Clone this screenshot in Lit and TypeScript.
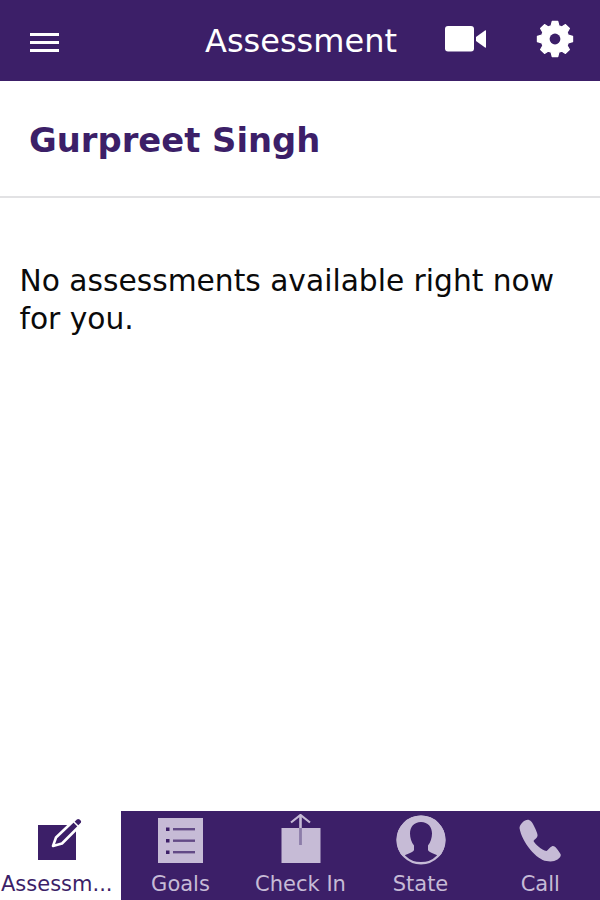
import { LitElement, html, css, svg } from "lit";
import { customElement } from "lit/decorators.js";

const PURPLE = "#3c1f68";

function gearPath(cx: number, cy: number, outer: number, root: number, teeth: number): string {
  const pts: string[] = [];
  const step = (Math.PI * 2) / teeth;
  for (let i = 0; i < teeth; i++) {
    const a = i * step - Math.PI / 2;
    const seq: [number, number][] = [
      [a - step * 0.36, root],
      [a - step * 0.2, outer],
      [a + step * 0.2, outer],
      [a + step * 0.36, root],
    ];
    for (const [t, r] of seq) {
      pts.push(`${(cx + r * Math.cos(t)).toFixed(2)} ${(cy + r * Math.sin(t)).toFixed(2)}`);
    }
  }
  return "M" + pts.join("L") + "z";
}

const ICONS = {
  edit: svg`<rect x="1" y="8" width="38" height="35" fill="currentColor"/>
    <path d="M16 29l3-8.500L39 1.500c1.500-1.300 3-1.300 4.500 0l1 1c1.300 1.500 1.300 3 0 4.500L25 26.500z" fill="currentColor" stroke="#fff" stroke-width="2.600" stroke-linejoin="round"/>
    <path d="M36.500 4.500l5 5" stroke="#fff" stroke-width="1.500"/>`,
  goals: svg`<rect x="0" y="0" width="45" height="45" fill="currentColor"/>
    <g fill="${PURPLE}"><rect x="8" y="9.500" width="3.500" height="3.500"/><rect x="8" y="21" width="3.500" height="3.500"/><rect x="8" y="32.500" width="3.500" height="3.500"/></g>
    <g fill="${PURPLE}" opacity=".72"><rect x="15" y="10" width="22" height="2.400"/><rect x="15" y="21.500" width="22" height="2.400"/><rect x="15" y="33" width="22" height="2.400"/></g>`,
  checkin: svg`<rect x="0.500" y="14" width="39" height="35" fill="currentColor"/>
    <path d="M10 8.500L19.500 1l9.500 7.500" fill="none" stroke="currentColor" stroke-width="2.200"/>
    <path d="M19.500 2V14" stroke="currentColor" stroke-width="2.600"/>
    <path d="M19.500 14V31" stroke="#8c7ca9" stroke-width="2.800"/>`,
  state: svg`<circle cx="25" cy="25" r="24.500" fill="currentColor"/>
    <path d="M25 7c-7 0-11 5-11 11.500 0 4.500 1.500 9 4 12V35c-1 2.500-7 3.500-12 7l9 8h20l9-8c-5-3.500-11-4.500-12-7v-4.500c2.500-3 4-7.500 4-12C36 12 32 7 25 7z" fill="${PURPLE}"/>
    <circle cx="25" cy="25" r="23.300" fill="none" stroke="currentColor" stroke-width="2.400"/>`,
  call: svg`<path d="M.5 9C1 5 6 0 10 1c2 .5 3.500 3 5 6 1.500 3 4 8 3.500 10-.5 2-3 3.500-4 5 1.500 3 8 9 13 10 1.500-1 3.500-4 6-5 3-.5 6 5 8 8 1 2-1 4-3 5.500-3 2-7 2.500-11 1.500C18 41 3 24 .5 9z" fill="currentColor"/>`,
};

@customElement("app-root")
export class AppRoot extends LitElement {
  static styles = css`
    :host { display: flex; flex-direction: column; height: 900px; width: 600px; background: #fff; font-family: "DejaVu Sans", sans-serif; overflow: hidden; }
    .top { flex: none; height: 81px; background: #3c1f68; display: flex; align-items: center; color: #fff; }
    .menu { flex: none; margin-left: 30px; margin-top: 3px; width: 29px; height: 19px; display: flex; flex-direction: column; justify-content: space-between; }
    .menu i { display: block; height: 3px; background: #fff; }
    .title { margin-left: 146px; flex: none; font-size: 32px; line-height: 36px; width: 240px; margin-top: 1px; }
    .video { flex: none; margin-top: -3px; }
    .gear { flex: none; margin-left: 50px; margin-top: -3px; }
    .name { flex: none; box-sizing: border-box; height: 117px; border-bottom: 2px solid #e2e2e4; display: flex; align-items: center; padding: 4px 0 0 29px; font-size: 33.800px; font-weight: 700; color: #3c1f68; }
    .body { flex: 1; padding: 64px 19.500px 0; font-size: 29.700px; line-height: 38px; color: #0a0a0a; }
    .tabs { flex: none; height: 89px; display: grid; grid-template-columns: 120.5px 120px 120px 120px 119.5px; background: #3c1f68; }
    .tab { display: flex; flex-direction: column; align-items: center; color: #c6bbd6; }
    .tab.on { background: #fff; color: #3c1f68; }
    .icon { flex: none; height: 58px; width: 100%; display: flex; align-items: center; justify-content: center; }
    .label { font-size: 21px; line-height: 24px; white-space: nowrap; margin-top: 3px; }
    .tab.on .label { margin-right: 7px; }
    svg { display: block; }
  `;
  render() {
    const tabs = [
      ["Assessm...", ICONS.edit, 46, 46, true],
      ["Goals", ICONS.goals, 45, 45, false],
      ["Check In", ICONS.checkin, 40, 52, false],
      ["State", ICONS.state, 50, 50, false],
      ["Call", ICONS.call, 43, 43, false],
    ] as const;
    return html`
      <div class="top">
        <div class="menu"><i></i><i></i><i></i></div>
        <div class="title">Assessment</div>
        <svg class="video" width="41" height="26" viewBox="0 0 41 26"><rect x="0" y="0" width="29" height="25.500" rx="3" fill="#fff"/><path d="M31 11 40 4.500c.6-.4 1-.2 1 .5v16c0 .7-.4.9-1 .5L31 15z" fill="#fff"/></svg>
        <svg class="gear" width="38" height="38" viewBox="0 0 38 38"><path fill="#fff" fill-rule="evenodd" stroke="#fff" stroke-width="1.200" stroke-linejoin="round" d="${gearPath(19, 19, 17.800, 13.800, 8)}"/><circle cx="19" cy="19" r="5.400" fill="${PURPLE}"/></svg>
      </div>
      <div class="name">Gurpreet Singh</div>
      <div class="body">No assessments available right now for you.</div>
      <div class="tabs">
        ${tabs.map(([label, icon, w, h, on]) => html`
          <div class="tab ${on ? "on" : ""}">
            <div class="icon"><svg width=${w} height=${h} viewBox="0 0 ${w} ${h}">${icon}</svg></div>
            <div class="label">${label}</div>
          </div>`)}
      </div>
    `;
  }
}
